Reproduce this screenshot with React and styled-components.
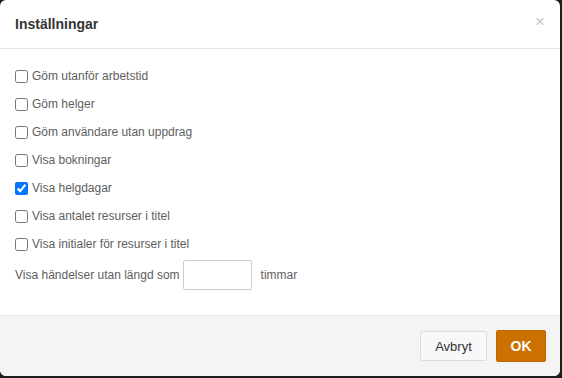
import React, { useState } from 'react';
import styled, { createGlobalStyle } from 'styled-components';

const GlobalStyle = createGlobalStyle`
  html, body {
    margin: 0;
    padding: 0;
    background: #1c1c1c;
  }
  body {
    font-family: "Liberation Sans", Arial, sans-serif;
  }
`;

const Dialog = styled.div`
  width: 560px;
  height: 376px;
  background: #fff;
  border-radius: 6px;
  display: flex;
  flex-direction: column;
  overflow: hidden;
`;

const Header = styled.div`
  height: 48px;
  border-bottom: 1px solid #e5e5e5;
  display: flex;
  align-items: center;
  justify-content: space-between;
  padding: 0 15px;
  flex-shrink: 0;
`;

const Title = styled.h4`
  margin: 0;
  font-size: 14px;
  font-weight: bold;
  color: #333;
`;

const Close = styled.button`
  border: 0;
  background: none;
  padding: 0;
  margin-top: -6px;
  font-family: "Liberation Sans", Arial, sans-serif;
  font-size: 17px;
  line-height: 1;
  color: #c8c8c8;
  cursor: pointer;
`;

const Body = styled.div`
  flex: 1;
  padding: 13px 15px 0;
  display: flex;
  flex-direction: column;
`;

const Row = styled.label`
  display: flex;
  align-items: center;
  height: 28px;
  font-size: 12px;
  color: #5e5e5e;
`;

const Check = styled.input`
  width: 13px;
  height: 13px;
  margin: 0 4px 0 0;
  accent-color: #0075ff;
`;

const InputRow = styled.div`
  display: flex;
  align-items: center;
  margin-top: 2px;
  font-size: 12px;
  color: #5e5e5e;
`;

const Hours = styled.input`
  width: 69px;
  height: 30px;
  box-sizing: border-box;
  margin: 0 9px 0 3px;
  border: 1px solid #ccc;
  border-radius: 2px;
  padding: 0 6px;
  font-size: 12px;
`;

const Footer = styled.div`
  height: 60px;
  border-top: 1px solid #e5e5e5;
  background: #f4f4f4;
  display: flex;
  align-items: center;
  justify-content: flex-end;
  gap: 9px;
  padding: 0 14px 0 0;
  flex-shrink: 0;
`;

const Button = styled.button`
  box-sizing: border-box;
  font-family: "Liberation Sans", Arial, sans-serif;
  cursor: pointer;
  border-radius: 2px;
  ${(p) =>
    p.$primary
      ? `
    width: 50px;
    height: 32px;
    background: #cc7000;
    border: 1px solid #c06800;
    color: #fff;
    font-weight: bold;
    font-size: 14px;
  `
      : `
    width: 67px;
    height: 30px;
    background: #f8f8f8;
    border: 1px solid #dcdcdc;
    color: #333;
    font-size: 13px;
  `}
`;

const options = [
  { label: 'Göm utanför arbetstid', checked: false },
  { label: 'Göm helger', checked: false },
  { label: 'Göm användare utan uppdrag', checked: false },
  { label: 'Visa bokningar', checked: false },
  { label: 'Visa helgdagar', checked: true },
  { label: 'Visa antalet resurser i titel', checked: false },
  { label: 'Visa initialer för resurser i titel', checked: false },
];

const App = () => {
  const [values, setValues] = useState(options.map((o) => o.checked));

  const toggle = (i) =>
    setValues((v) => v.map((x, j) => (j === i ? !x : x)));

  return (
    <>
      <GlobalStyle />
      <Dialog>
        <Header>
          <Title>Inställningar</Title>
          <Close>×</Close>
        </Header>
        <Body>
          {options.map((o, i) => (
            <Row key={o.label}>
              <Check type="checkbox" checked={values[i]} onChange={() => toggle(i)} />
              {o.label}
            </Row>
          ))}
          <InputRow>
            Visa händelser utan längd som
            <Hours type="text" />
            timmar
          </InputRow>
        </Body>
        <Footer>
          <Button>Avbryt</Button>
          <Button $primary>OK</Button>
        </Footer>
      </Dialog>
    </>
  );
};

export default App;
